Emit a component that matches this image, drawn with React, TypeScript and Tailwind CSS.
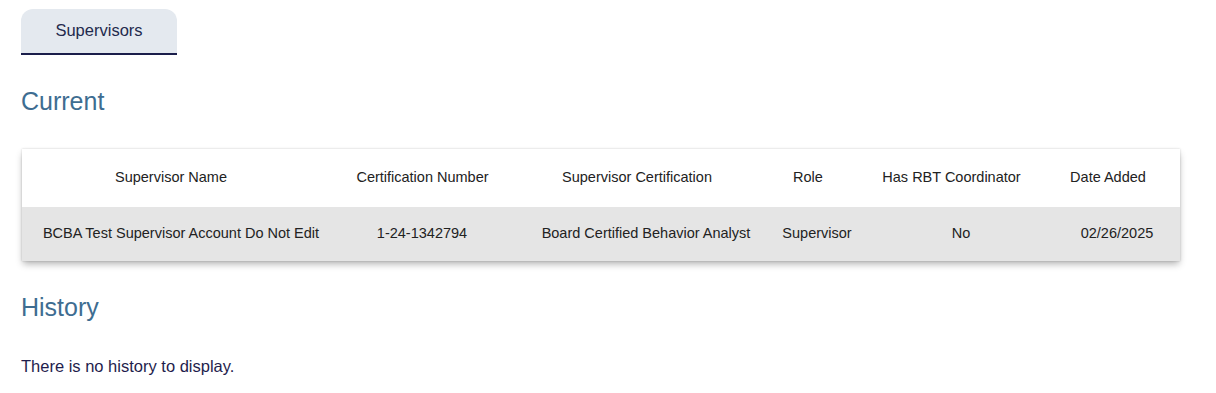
import React from "react";

type Col = { width: number; head: string; headPad: string; bodyPad: string };

const columns: Col[] = [
  { width: 328, head: "Supervisor Name", headPad: "pr-[30px]", bodyPad: "pr-[10px]" },
  { width: 150, head: "Certification Number", headPad: "pr-[5px]", bodyPad: "pr-[6px]" },
  { width: 267, head: "Supervisor Certification", headPad: "pl-[7px]", bodyPad: "pl-[25px]" },
  { width: 100, head: "Role", headPad: "pr-[18px]", bodyPad: "" },
  { width: 173, head: "Has RBT Coordinator", headPad: "pr-[4px]", bodyPad: "pl-[15px]" },
  { width: 140, head: "Date Added", headPad: "pr-[4px]", bodyPad: "pl-[14px]" },
];

const rows: string[][] = [
  [
    "BCBA Test Supervisor Account Do Not Edit",
    "1-24-1342794",
    "Board Certified Behavior Analyst",
    "Supervisor",
    "No",
    "02/26/2025",
  ],
];

const gridCols = "grid grid-cols-[328px_150px_267px_100px_173px_140px]";

export default function App() {
  return (
    <div
      className="min-h-[393px] bg-white px-[21px]"
      style={{ fontFamily: '"Liberation Sans", Arial, Helvetica, sans-serif' }}
    >
      {/* tab strip */}
      <div className="pt-[9px]">
        <div className="flex h-[46px] w-[156px] items-center justify-center rounded-t-[12px] border-b-2 border-[#1b1e4b] bg-[#e4e9ef] pb-[1px] text-[16.5px] text-[#232a4d]">
          Supervisors
        </div>
      </div>

      <h2 className="mt-[32px] h-[28px] text-[25px] leading-[28px] text-[#3e6d91]">Current</h2>

      {/* current supervisors table */}
      <div className="ml-[1px] mt-[34px] w-[1158px] bg-white shadow-[0_4px_7px_-1px_rgba(0,0,0,0.3),0_0_2px_rgba(0,0,0,0.18)]">
        <div className={`${gridCols} h-[58px] items-center text-[14.5px] text-[#222]`}>
          {columns.map((c) => (
            <div key={c.head} className={`whitespace-nowrap text-center ${c.headPad}`}>
              {c.head}
            </div>
          ))}
        </div>
        {rows.map((r, i) => (
          <div key={i} className={`${gridCols} h-[54px] items-center bg-[#e5e5e5] text-[14.5px] text-[#222]`}>
            {r.map((v, j) => (
              <div key={j} className={`whitespace-nowrap text-center ${columns[j].bodyPad}`}>
                {v}
              </div>
            ))}
          </div>
        ))}
      </div>

      <h2 className="mt-[32px] h-[28px] text-[25px] leading-[28px] text-[#3e6d91]">History</h2>

      <p className="mt-[35px] text-[16.5px] leading-[20px] text-[#1f1d4d]">There is no history to display.</p>
    </div>
  );
}
